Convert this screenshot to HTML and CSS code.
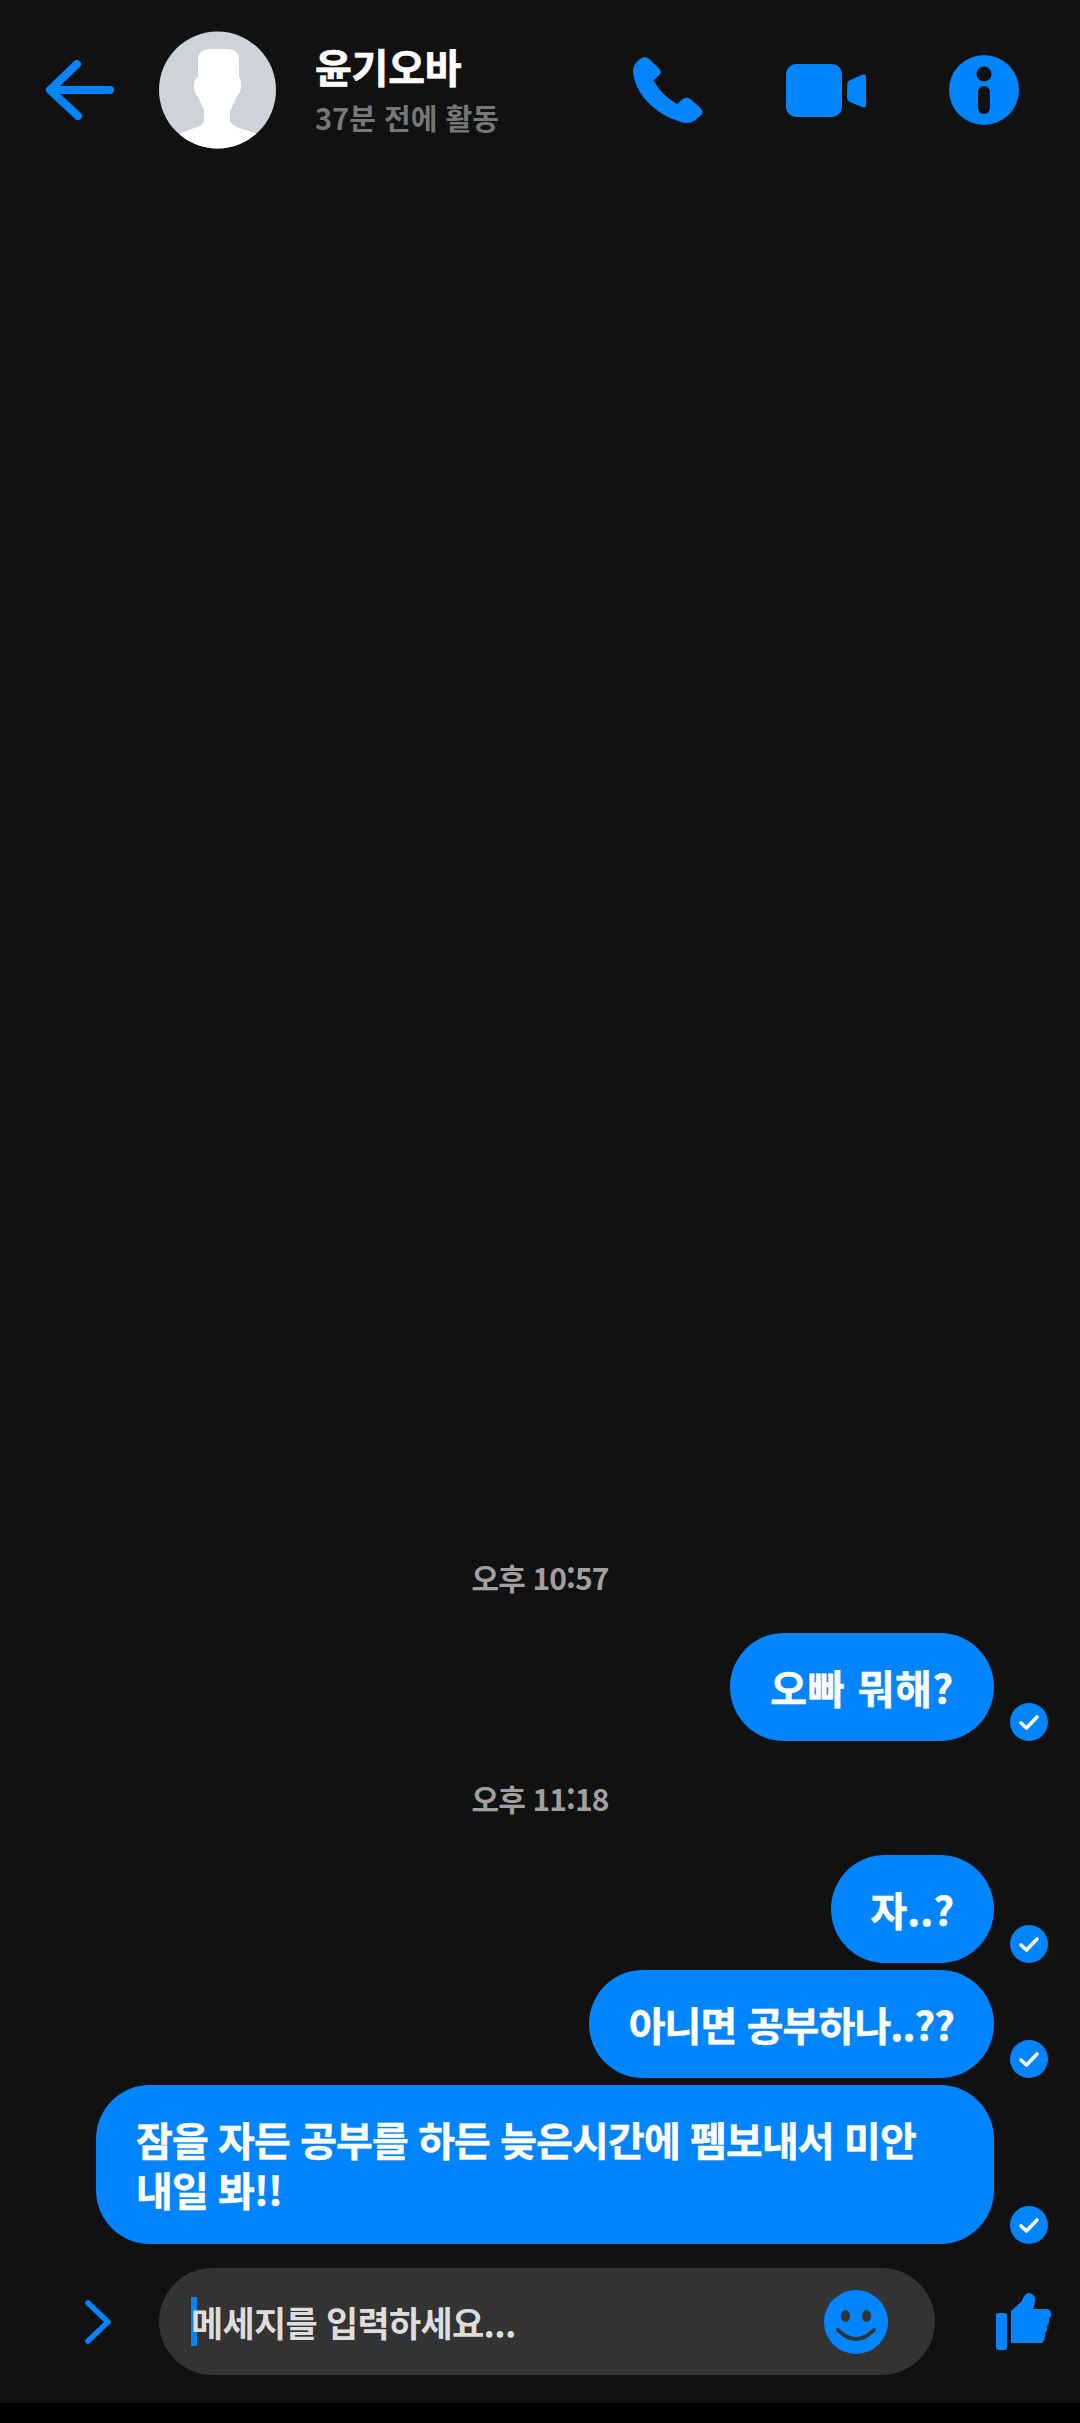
FILE: index.html
```html
<!DOCTYPE html>
<html lang="ko">
<head>
<meta charset="utf-8">
<title>윤기오바</title>
<link rel="stylesheet" href="styles.css">
</head>
<body>
<div class="screen">
  <header class="top">
    <svg class="ic-back" viewBox="0 0 68 60"><path d="M31 4 L4 30 L32 56 M4 30 H64" fill="none" stroke="#0084ff" stroke-width="8" stroke-linecap="round" stroke-linejoin="round"/></svg>
    <svg class="avatar" viewBox="0 0 117 118"><defs><clipPath id="av"><circle cx="58.5" cy="59" r="58.5"/></clipPath></defs><circle cx="58.5" cy="59" r="58.5" fill="#ced2d9"/><path clip-path="url(#av)" d="M39 28 C39 21 45 18 52 18 H67 C75 18 80 21 80 28 V46 C82 48 82 52 82 56 C82 60 80 64 78 65 L71 80 V90 C72 93 76 95 80 97 L96 102 L120 125 H0 L22 102 L38 96 C43 94 45 92 45 88 V79 L39 66 C37 64 35 60 35 55 C35 51 36 48 39 46 Z" fill="#fff"/></svg>
    <div class="who">
      <div class="name">윤기오바</div>
      <div class="seen">37분 전에 활동</div>
    </div>
    <div class="acts">
      <svg class="ic-phone" viewBox="98 105 212 205"><path d="M120 113 Q135 103 148 114 L178 143 Q187 153 178 162 L160 178 Q185 225 232 250 L248 235 Q260 225 272 235 L303 263 Q314 274 303 285 L285 300 Q270 312 245 305 Q175 285 130 230 Q100 190 98 150 Q98 130 120 113Z" fill="#0084ff"/></svg>
      <svg class="ic-video" viewBox="557 128 240 159"><rect x="557" y="128" width="168" height="159" rx="30" fill="#0084ff"/><path d="M741 190 Q740 180 750 176 L785 160 Q797 155 797 168 V250 Q797 262 785 257 L750 243 Q740 238 740 228 Z" fill="#0084ff"/></svg>
      <svg class="ic-info" viewBox="0 0 70 70"><circle cx="35" cy="35" r="35" fill="#0084ff"/><circle cx="35" cy="19" r="7.5" fill="#111"/><rect x="29" y="31" width="12" height="28" rx="6" fill="#111"/></svg>
    </div>
  </header>

  <main class="chat">
    <div class="time">오후 10:57</div>
    <div class="row">
      <div class="bubble wide">오빠 뭐해?</div>
      <svg class="tick" viewBox="0 0 38 38"><circle cx="19" cy="19" r="19" fill="#0084ff"/><path d="M11 20 L16.500 25 L27 14" fill="none" stroke="#fff" stroke-width="3.600" stroke-linecap="round" stroke-linejoin="round"/></svg>
    </div>
    <div class="time second">오후 11:18</div>
    <div class="stack">
      <div class="row">
        <div class="bubble">자..?</div>
        <svg class="tick" viewBox="0 0 38 38"><circle cx="19" cy="19" r="19" fill="#0084ff"/><path d="M11 20 L16.500 25 L27 14" fill="none" stroke="#fff" stroke-width="3.600" stroke-linecap="round" stroke-linejoin="round"/></svg>
      </div>
      <div class="row">
        <div class="bubble tight">아니면 공부하나..??</div>
        <svg class="tick" viewBox="0 0 38 38"><circle cx="19" cy="19" r="19" fill="#0084ff"/><path d="M11 20 L16.500 25 L27 14" fill="none" stroke="#fff" stroke-width="3.600" stroke-linecap="round" stroke-linejoin="round"/></svg>
      </div>
      <div class="row">
        <div class="bubble long">잠을 자든 공부를 하든 늦은시간에 펨보내서 미안<br>내일 봐!!</div>
        <svg class="tick" viewBox="0 0 38 38"><circle cx="19" cy="19" r="19" fill="#0084ff"/><path d="M11 20 L16.500 25 L27 14" fill="none" stroke="#fff" stroke-width="3.600" stroke-linecap="round" stroke-linejoin="round"/></svg>
      </div>
    </div>
  </main>

  <footer class="composer">
    <svg class="ic-more" viewBox="0 0 26 44"><path d="M3 3 L23 22 L3 41" fill="none" stroke="#0084ff" stroke-width="5.500" stroke-linecap="round" stroke-linejoin="round"/></svg>
    <div class="field">
      <span class="caret"></span>
      <span class="hint">메세지를 입력하세요...</span>
      <svg class="ic-smile" viewBox="0 0 64 64"><circle cx="32" cy="32" r="32" fill="#0084ff"/><ellipse cx="21.500" cy="26" rx="4.500" ry="6" fill="#333"/><ellipse cx="42.500" cy="26" rx="4.500" ry="6" fill="#333"/><path d="M14 40 Q32 58 50 40" fill="none" stroke="#333" stroke-width="3.800" stroke-linecap="round"/></svg>
    </div>
    <svg class="ic-like" viewBox="0 0 55 57"><rect x="0" y="20" width="11" height="37" rx="2.500" fill="#0084ff"/><path d="M15 18 L26 8 Q28 1 32 0 Q39 0 39 7 Q39 12 37 16 H51 Q56 17 55 23 L53 26 Q54 30 51 33 Q52 37 49 40 Q50 46 46 50 H15 Z" fill="#0084ff"/></svg>
  </footer>
  <div class="strip"></div>
</div>
</body>
</html>
```
FILE: styles.css
```css
* { box-sizing: border-box; }
html, body { margin: 0; padding: 0; background: #000; }
.screen {
  width: 1080px;
  height: 2423px;
  display: flex;
  flex-direction: column;
  background: #111112;
  font-family: "Noto Sans CJK KR", "Noto Sans", sans-serif;
  font-weight: 700;
}
.top {
  height: 180px;
  flex: none;
  display: flex;
  align-items: center;
  padding: 0 61px 0 46px;
}
.ic-back { width: 68px; height: 60px; flex: none; }
.avatar { width: 117px; height: 118px; margin-left: 45px; flex: none; }
.who { margin-left: 39px; display: flex; flex-direction: column; }
.name { color: #fff; font-size: 40px; line-height: 50px; margin-top: -3px; letter-spacing: -0.2px; -webkit-text-stroke: 0.7px #fff; }
.seen { color: #777; font-size: 29px; line-height: 40px; margin-top: 6px; letter-spacing: 0; }
.acts { margin-left: auto; display: flex; align-items: center; gap: 83px; }
.ic-phone { width: 70px; height: 68px; }
.ic-video { width: 80px; height: 53px; }
.ic-info { width: 70px; height: 70px; }

.chat {
  flex: 1;
  display: flex;
  flex-direction: column;
  justify-content: flex-end;
  padding: 0 32px 0 96px;
}
.time {
  color: #a0a0a0;
  font-size: 30px;
  line-height: 40px;
  text-align: center;
  letter-spacing: -0.9px;
  margin: 0 -32px 36px -96px;
}
.second { margin-top: 37px; margin-bottom: 37px; }
.stack { display: flex; flex-direction: column; gap: 7px; }
.row { display: flex; justify-content: flex-end; align-items: flex-end; gap: 16px; }
.bubble {
  background: #0084ff;
  color: #fff;
  font-size: 40px;
  line-height: 50px;
  padding: 29px 40px;
  border-radius: 54px;
  -webkit-text-stroke: 0.5px #fff;
}
.wide { letter-spacing: 0.8px; }
.tight { letter-spacing: -0.9px; }
.long { flex: 1; padding: 29px 30px 30px 40px; letter-spacing: -0.9px; }
.tick { width: 38px; height: 38px; flex: none; }

.composer {
  flex: none;
  margin-top: 24px;
  height: 107px;
  display: flex;
  align-items: center;
  padding-left: 85px;
}
.ic-more { width: 26px; height: 44px; flex: none; }
.field {
  margin-left: 48px;
  width: 776px;
  height: 107px;
  background: #333;
  border-radius: 54px;
  display: flex;
  align-items: center;
  padding-left: 32px;
}
.caret { width: 6px; height: 49px; background: #0084ff; flex: none; }
.hint { color: #ddd; font-size: 35px; line-height: 50px; margin-left: -6px; letter-spacing: -0.7px; }
.ic-smile { width: 64px; height: 64px; margin-left: auto; margin-right: 47px; flex: none; }
.ic-like { width: 55px; height: 57px; margin-left: 61px; flex: none; }
.strip { flex: none; height: 20px; margin-top: 28px; background: #000; }
```
